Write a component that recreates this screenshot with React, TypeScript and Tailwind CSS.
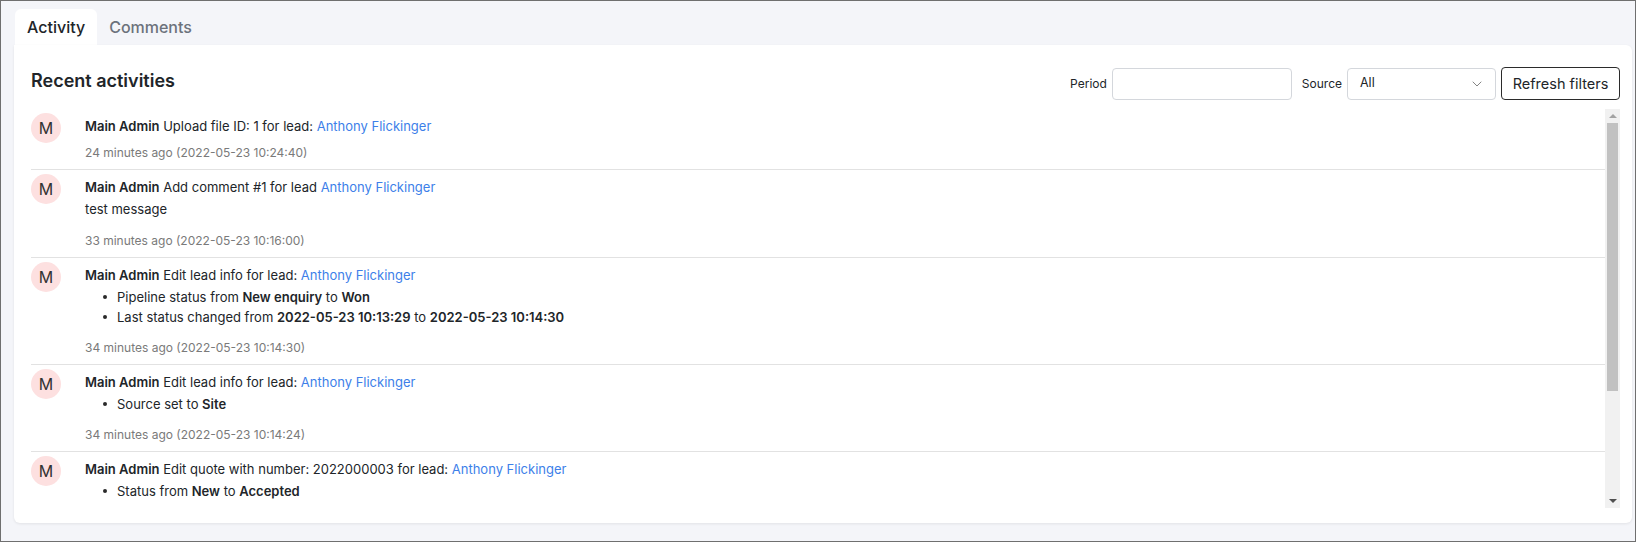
import React from 'react'
import { ChevronDown } from 'lucide-react'

type Activity = {
  id: number
  action: string
  note?: string
  changes?: React.ReactNode[]
  time?: string
}

const activities: Activity[] = [
  {
    id: 1,
    action: 'Upload file ID: 1 for lead:',
    time: '24 minutes ago (2022-05-23 10:24:40)',
  },
  {
    id: 2,
    action: 'Add comment #1 for lead',
    note: 'test message',
    time: '33 minutes ago (2022-05-23 10:16:00)',
  },
  {
    id: 3,
    action: 'Edit lead info for lead:',
    changes: [
      <>
        Pipeline status from <b className="font-semibold">New enquiry</b> to{' '}
        <b className="font-semibold">Won</b>
      </>,
      <>
        Last status changed from{' '}
        <b className="font-semibold">2022-05-23 10:13:29</b> to{' '}
        <b className="font-semibold">2022-05-23 10:14:30</b>
      </>,
    ],
    time: '34 minutes ago (2022-05-23 10:14:30)',
  },
  {
    id: 4,
    action: 'Edit lead info for lead:',
    changes: [
      <>
        Source set to <b className="font-semibold">Site</b>
      </>,
    ],
    time: '34 minutes ago (2022-05-23 10:14:24)',
  },
  {
    id: 5,
    action: 'Edit quote with number: 2022000003 for lead:',
    changes: [
      <>
        Status from <b className="font-semibold">New</b> to{' '}
        <b className="font-semibold">Accepted</b>
      </>,
    ],
  },
]

function ActivityRow({ item }: { item: Activity }) {
  return (
    <div className="flex gap-[24px] border-b border-[#e2e2e2] pt-[4px] pb-[6px]">
      <div className="w-[30px] h-[30px] shrink-0 rounded-full bg-[#fde0e0] flex items-center justify-center text-[16px] text-[#333]">
        M
      </div>
      <div className="flex flex-col pt-[3px] text-[13px] leading-[20px] text-[#212529]">
        <div>
          <span className="font-semibold">Main Admin</span> {item.action}{' '}
          <span className="text-[#3d7fe9]">Anthony Flickinger</span>
        </div>
        {item.note && <div className="mt-[2px] mb-[5px]">{item.note}</div>}
        {item.changes && (
          <ul className="mt-[2px] mb-[4px] pl-[18px]">
            {item.changes.map((c, i) => (
              <li key={i} className="flex">
                <span className="w-[14px] shrink-0 flex items-center">
                  <span className="w-[4px] h-[4px] rounded-full bg-[#2a2a2a]" />
                </span>
                <span>{c}</span>
              </li>
            ))}
          </ul>
        )}
        {item.time && (
          <div className="mt-[7px] text-[12px] text-[#7a7a7a]">{item.time}</div>
        )}
      </div>
    </div>
  )
}

function Scrollbar() {
  return (
    <div className="w-[15px] shrink-0 bg-[#f1f1f1] flex flex-col">
      <div className="h-[14px] flex items-center justify-center">
        <div className="w-0 h-0 border-l-[4px] border-r-[4px] border-b-[4px] border-l-transparent border-r-transparent border-b-[#a3a3a3]" />
      </div>
      <div className="mx-[2px] h-[268px] bg-[#c1c1c1]" />
      <div className="flex-1" />
      <div className="h-[15px] flex items-center justify-center">
        <div className="w-0 h-0 border-l-[4px] border-r-[4px] border-t-[4px] border-l-transparent border-r-transparent border-t-[#505050]" />
      </div>
    </div>
  )
}

export default function App() {
  return (
    <div className="w-[1636px] h-[542px] border border-[#6f6f6f] bg-[#f4f5f9] font-['Inter',sans-serif] text-[#212529] flex flex-col">
      <div className="flex pt-[8px] pl-[14px]">
        <div className="h-[36px] px-3 rounded-t-[6px] bg-white flex items-center text-[16px] font-medium text-[#212529]">
          Activity
        </div>
        <div className="h-[36px] px-3 flex items-center text-[16px] font-medium text-[#6c727c]">
          Comments
        </div>
      </div>
      <div className="ml-[13px] w-[1618px] h-[478px] bg-white rounded-[6px] rounded-tl-none shadow-[0_1px_3px_rgba(0,0,0,0.08)] pt-[22px] pb-[15px] pl-[17px] pr-[12px] flex flex-col">
        <div className="flex items-start justify-between h-[32px] mb-[10px]">
          <h2 className="mt-[2px] text-[18px] leading-[24px] font-semibold">Recent activities</h2>
          <div className="flex items-center text-[12px]">
            <span className="mr-[5px]">Period</span>
            <input className="w-[180px] h-[32px] border border-[#d4d7dc] rounded-[4px] outline-none" />
            <span className="ml-[10px] mr-[5px]">Source</span>
            <div className="w-[149px] h-[32px] border border-[#d4d7dc] rounded-[4px] flex items-center justify-between pl-[12px] pr-[10px] text-[12.5px]">
              <span>All</span>
              <ChevronDown size={16} strokeWidth={1.25} className="text-[#6b6b6b]" />
            </div>
            <button className="ml-[5px] w-[119px] h-[33px] border border-[#2b2b2b] rounded-[4px] text-[14.5px] text-[#212529] bg-white">
              Refresh filters
            </button>
          </div>
        </div>
        <div className="flex flex-1 min-h-0">
          <div className="flex-1 overflow-hidden">
            {activities.map((a) => (
              <ActivityRow key={a.id} item={a} />
            ))}
          </div>
          <Scrollbar />
        </div>
      </div>
    </div>
  )
}
